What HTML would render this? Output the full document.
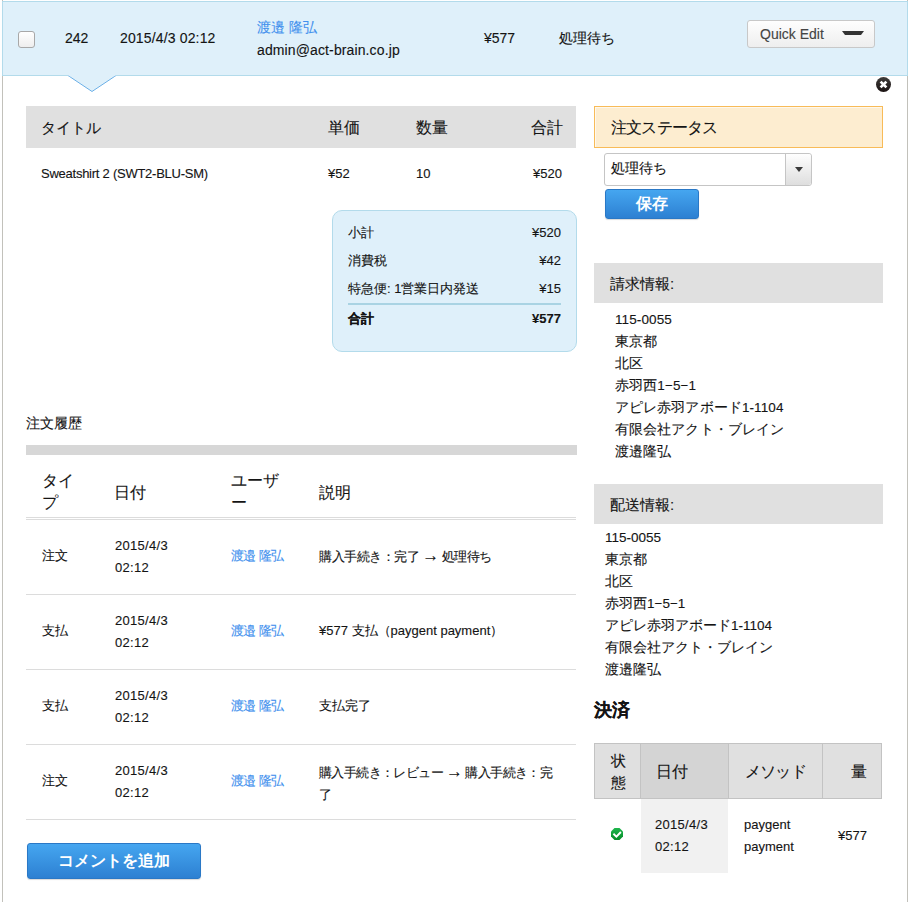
<!DOCTYPE html>
<html><head><meta charset="utf-8">
<style>
html,body{margin:0;padding:0;background:#fff;}
body{width:908px;height:902px;overflow:hidden;position:relative;font-family:"Liberation Sans",sans-serif;color:#141414;font-size:13px;-webkit-text-stroke-width:0.12px;}
.a{position:absolute;white-space:nowrap;}
.blue{color:#4290ee;}
/* header */
#frameL{position:absolute;left:2px;top:0;width:1px;height:902px;background:#c2c1bb;}
#frameR{position:absolute;left:907px;top:0;width:1px;height:902px;background:#c2c1bb;}
#hdr{position:absolute;left:2px;top:1px;width:904px;height:73px;background:#dff0fa;border:1px solid #b3dbeb;}
#chk{position:absolute;left:18px;top:31px;width:15px;height:15px;border:1px solid #a8a8a8;border-radius:3px;background:linear-gradient(#fff,#eee);}
#qe{position:absolute;left:747px;top:20px;width:126px;height:26px;border:1px solid #c8c8c8;border-radius:3px;background:linear-gradient(#fefefe,#eeeeee);}
#close{position:absolute;left:876px;top:77px;width:15px;height:15px;border-radius:50%;background:linear-gradient(#3e3b39,#1b1313);}
/* items */
.gbar{position:absolute;background:#e0e0e0;}
#totals{position:absolute;left:332px;top:210px;width:243px;height:140px;background:#dff0fa;border:1px solid #b3dbeb;border-radius:10px;}
.sep{position:absolute;background:#a9d3e3;}
#status{position:absolute;left:594px;top:106px;width:287px;height:40px;background:#fdedd0;border:1px solid #f8bb58;box-shadow:inset 1px 1px 0 rgba(255,255,255,.6);}
#sel{position:absolute;left:604px;top:153px;width:206px;height:31px;border:1px solid #c5c5c5;border-radius:3px;background:#fff;}
#selarrow{position:absolute;left:785px;top:154px;width:25px;height:31px;border-left:1px solid #c5c5c5;background:linear-gradient(#fefefe,#dedede);border-radius:0 3px 3px 0;}
.btn{position:absolute;border-radius:3px;background:linear-gradient(#45a6f0,#2d80d2);border:1px solid #2a78c6;box-shadow:0 1px 1px rgba(0,0,0,.15);color:#fff;font-weight:bold;text-align:center;-webkit-text-stroke-width:0;}
.hline{position:absolute;left:26px;width:550px;height:1px;background:#dcdcdc;}
/* payment table */
#pt{position:absolute;left:594px;top:743px;}
.pc{position:absolute;box-sizing:border-box;}
</style></head><body>
<div id="frameL"></div>
<div id="frameR"></div>
<div id="hdr"></div>
<div id="chk"></div>
<div class="a" style="left:65px;top:31px;font-size:14px;line-height:14px">242</div>
<div class="a" style="left:120px;top:31px;font-size:14px;line-height:14px;letter-spacing:0.15px">2015/4/3 02:12</div>
<div class="a blue" style="left:257px;top:20px;font-size:14px;line-height:14px">渡邉 隆弘</div>
<div class="a" style="left:257px;top:43px;font-size:14px;line-height:14px;letter-spacing:0.12px">admin@act-brain.co.jp</div>
<div class="a" style="left:484px;top:31px;font-size:14px;line-height:14px">¥577</div>
<div class="a" style="left:559px;top:31px;font-size:14px;line-height:14px">処理待ち</div>
<div id="qe"></div>
<div class="a" style="left:760px;top:27px;font-size:14px;line-height:14px;color:#444">Quick Edit</div>
<svg class="a" style="left:842px;top:31px" width="22" height="5"><path d="M0 0H22L19 4H3Z" fill="#333"/></svg>
<!-- arrow -->
<svg class="a" style="left:67px;top:75px" width="50" height="18"><path d="M1 0.5L25 16.5L49 0.5" fill="#dff0fa" stroke="#6db0e8" stroke-width="1"/><rect x="1.5" y="0" width="47" height="1.2" fill="#dff0fa"/></svg>
<div id="close"></div>
<svg class="a" style="left:876px;top:77px" width="15" height="15"><path d="M4.6 4.6L10.4 10.4M10.4 4.6L4.6 10.4" stroke="#fff" stroke-width="2.7" stroke-linecap="butt"/></svg>

<!-- items table -->
<div class="gbar" style="left:26px;top:106px;width:550px;height:42px"></div>
<div class="a" style="left:41px;top:120px;font-size:15px;line-height:16px">タイトル</div>
<div class="a" style="left:328px;top:120px;font-size:16px;line-height:16px">単価</div>
<div class="a" style="left:416px;top:120px;font-size:16px;line-height:16px">数量</div>
<div class="a" style="left:531px;top:120px;font-size:16px;line-height:16px">合計</div>
<div class="a" style="left:41px;top:167px;font-size:13px;line-height:13px;letter-spacing:-0.25px">Sweatshirt 2 (SWT2-BLU-SM)</div>
<div class="a" style="left:328px;top:167px;font-size:13px;line-height:13px">¥52</div>
<div class="a" style="left:416px;top:167px;font-size:13px;line-height:13px">10</div>
<div class="a" style="left:533px;top:167px;font-size:13px;line-height:13px">¥520</div>

<div id="totals"></div>
<div class="a" style="left:348px;top:226px;font-size:13px;line-height:13px">小計</div>
<div class="a" style="right:347px;top:226px;font-size:13px;line-height:13px">¥520</div>
<div class="a" style="left:348px;top:254px;font-size:13px;line-height:13px">消費税</div>
<div class="a" style="right:347px;top:254px;font-size:13px;line-height:13px">¥42</div>
<div class="a" style="left:348px;top:282px;font-size:13px;line-height:13px">特急便: 1営業日内発送</div>
<div class="a" style="right:347px;top:282px;font-size:13px;line-height:13px">¥15</div>
<div class="sep" style="left:348px;top:303px;width:213px;height:2px"></div>
<div class="a" style="left:348px;top:312px;font-size:13px;line-height:13px;font-weight:bold">合計</div>
<div class="a" style="right:347px;top:312px;font-size:13px;line-height:13px;font-weight:bold">¥577</div>

<!-- history -->
<div class="a" style="left:26px;top:417px;font-size:13.5px;line-height:14px">注文履歴</div>
<div class="gbar" style="left:26px;top:445px;width:551px;height:10px;background:#d7d7d7"></div>
<div class="a" style="left:42px;top:470px;font-size:16px;line-height:21.5px">タイ<br>プ</div>
<div class="a" style="left:114px;top:485px;font-size:16px;line-height:16px">日付</div>
<div class="a" style="left:231px;top:470px;font-size:16px;line-height:21.5px">ユーザ<br>ー</div>
<div class="a" style="left:319px;top:485px;font-size:16px;line-height:16px">説明</div>
<div class="hline" style="top:517px"></div>
<div class="hline" style="top:519px"></div>

<div class="a" style="left:42px;top:549px;font-size:13px;line-height:13px">注文</div>
<div class="a" style="left:115px;top:535px;font-size:13px;line-height:22px;letter-spacing:0.3px">2015/4/3<br>02:12</div>
<div class="a blue" style="letter-spacing:-0.6px;left:231px;top:549px;font-size:13px;line-height:13px">渡邉 隆弘</div>
<div class="a" style="left:319px;top:549px;font-size:13px;line-height:13px"><span style="letter-spacing:-0.5px">購入手続き：完了 <span style="font-size:17px">→</span> 処理待ち</span></div>
<div class="hline" style="top:594px"></div>

<div class="a" style="left:42px;top:624px;font-size:13px;line-height:13px">支払</div>
<div class="a" style="left:115px;top:610px;font-size:13px;line-height:22px;letter-spacing:0.3px">2015/4/3<br>02:12</div>
<div class="a blue" style="letter-spacing:-0.6px;left:231px;top:624px;font-size:13px;line-height:13px">渡邉 隆弘</div>
<div class="a" style="left:319px;top:624px;font-size:13px;line-height:13px">¥577 支払（paygent payment）</div>
<div class="hline" style="top:669px"></div>

<div class="a" style="left:42px;top:699px;font-size:13px;line-height:13px">支払</div>
<div class="a" style="left:115px;top:685px;font-size:13px;line-height:22px;letter-spacing:0.3px">2015/4/3<br>02:12</div>
<div class="a blue" style="letter-spacing:-0.6px;left:231px;top:699px;font-size:13px;line-height:13px">渡邉 隆弘</div>
<div class="a" style="left:319px;top:699px;font-size:13px;line-height:13px">支払完了</div>
<div class="hline" style="top:744px"></div>

<div class="a" style="left:42px;top:774px;font-size:13px;line-height:13px">注文</div>
<div class="a" style="left:115px;top:760px;font-size:13px;line-height:22px;letter-spacing:0.3px">2015/4/3<br>02:12</div>
<div class="a blue" style="letter-spacing:-0.6px;left:231px;top:774px;font-size:13px;line-height:13px">渡邉 隆弘</div>
<div class="a" style="left:319px;top:761px;font-size:13px;line-height:22px"><span style="letter-spacing:-0.6px">購入手続き：レビュー <span style="font-size:17px">→</span> 購入手続き：完</span><br>了</div>
<div class="hline" style="top:819px"></div>

<div class="btn" style="left:27px;top:843px;width:172px;height:34px;font-size:16px;line-height:34px">コメントを追加</div>

<!-- right column -->
<div id="status"></div>
<div class="a" style="left:611px;top:120px;font-size:16px;line-height:16px;letter-spacing:-0.8px">注文ステータス</div>
<div id="sel"></div>
<div id="selarrow"></div>
<svg class="a" style="left:795px;top:167px" width="8" height="5"><path d="M0 0H8L4 5Z" fill="#3a3a3a"/></svg>
<div class="a" style="left:611px;top:161px;font-size:14px;line-height:14px">処理待ち</div>
<div class="btn" style="left:605px;top:189px;width:92px;height:28px;font-size:16px;line-height:28px">保存</div>

<div class="gbar" style="left:594px;top:263px;width:289px;height:40px"></div>
<div class="a" style="left:610px;top:276px;font-size:15px;line-height:15px">請求情報:</div>
<div class="a" style="left:615px;top:309px;font-size:13.5px;line-height:22px;letter-spacing:0.1px">115-0055<br>東京都<br>北区<br>赤羽西1−5−1<br>アピレ赤羽アボード1-1104<br>有限会社アクト・ブレイン<br>渡邉隆弘</div>

<div class="gbar" style="left:594px;top:484px;width:289px;height:40px"></div>
<div class="a" style="left:610px;top:497px;font-size:15px;line-height:15px">配送情報:</div>
<div class="a" style="left:605px;top:527px;font-size:13.5px;line-height:22px">115-0055<br>東京都<br>北区<br>赤羽西1−5−1<br>アピレ赤羽アボード1-1104<br>有限会社アクト・ブレイン<br>渡邉隆弘</div>

<div class="a" style="left:594px;top:701px;font-size:18px;line-height:18px;font-weight:bold">決済</div>

<div class="pc" style="left:594px;top:743px;width:288px;height:56px;background:#e0e0e0;border:1px solid #c3c3c3"></div>
<div class="pc" style="left:640px;top:743px;width:89px;height:56px;background:#d4d4d4;border:1px solid #c3c3c3"></div>
<div class="pc" style="left:822px;top:743px;width:1px;height:56px;background:#c3c3c3"></div>
<div class="pc" style="left:641px;top:799px;width:87px;height:74px;background:#f1f1f1"></div>
<div class="a" style="left:611px;top:750px;font-size:15px;line-height:22px">状<br>態</div>
<div class="a" style="left:656px;top:764px;font-size:16px;line-height:16px">日付</div>
<div class="a" style="left:745px;top:764px;font-size:16px;line-height:16px;letter-spacing:-0.8px">メソッド</div>
<div class="a" style="left:851px;top:764px;font-size:16px;line-height:16px">量</div>
<svg class="a" style="left:611px;top:828px" width="12" height="12"><defs><linearGradient id="gg" x1="0" y1="0" x2="0" y2="1"><stop offset="0" stop-color="#1db54c"/><stop offset="1" stop-color="#078c28"/></linearGradient></defs><path d="M3.5 0H8.5L12 3.5V8.5L8.5 12H3.5L0 8.5V3.5Z" fill="url(#gg)"/><path d="M2.4 5.8L5.4 8.6L9.9 4" stroke="#fff" stroke-width="1.9" fill="none"/></svg>
<div class="a" style="left:655px;top:814px;font-size:13px;line-height:22px;letter-spacing:0.3px">2015/4/3<br>02:12</div>
<div class="a" style="left:744px;top:814px;font-size:13px;line-height:22px">paygent<br>payment</div>
<div class="a" style="left:838px;top:829px;font-size:13px;line-height:13px">¥577</div>
</body></html>
